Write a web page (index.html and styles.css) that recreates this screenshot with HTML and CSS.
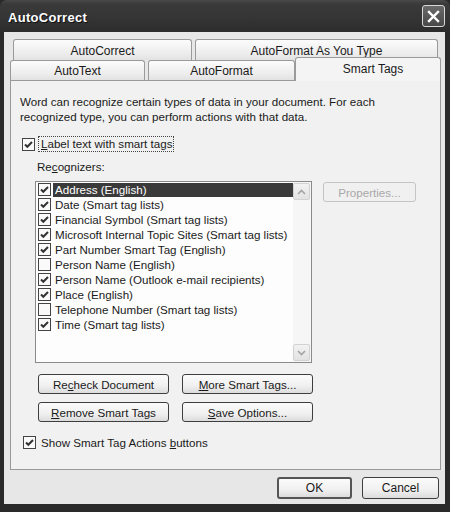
FILE: index.html
```html
<!DOCTYPE html>
<html>
<head>
<meta charset="utf-8">
<link rel="stylesheet" href="styles.css">
</head>
<body>
<div class="window">
  <div class="titlebar">
    <span class="title">AutoCorrect</span>
    <span class="close"><svg width="13" height="13" viewBox="0 0 13 13"><path d="M2 2 L11 11 M11 2 L2 11" stroke="#fff" stroke-width="2.4" stroke-linecap="square"/></svg></span>
  </div>
  <div class="client">
    <div class="tabs">
      <div class="tabrow row1">
        <div class="tab t-ac">AutoCorrect</div>
        <div class="tab t-afay">AutoFormat As You Type</div>
      </div>
      <div class="tabrow row2">
        <div class="tab t-at">AutoText</div>
        <div class="tab t-af">AutoFormat</div>
        <div class="tab t-st selected">Smart Tags</div>
      </div>
    </div>
    <div class="panel">
      <p class="desc">Word can recognize certain types of data in your document. For each<br>recognized type, you can perform actions with that data.</p>
      <div class="check-row label-row">
        <span class="cb checked"><svg viewBox="0 0 11 11"><path d="M2 5.5 L4.3 7.8 L9 3" /></svg></span>
        <span class="focus"><u>L</u>abel text with smart tags</span>
      </div>
      <div class="recog">Re<u>c</u>ognizers:</div>
      <div class="list-area">
        <div class="listbox">
          <div class="items">
            <div class="item sel"><span class="cb checked"><svg viewBox="0 0 11 11"><path d="M2 5.5 L4.3 7.8 L9 3" /></svg></span><span class="itext">Address (English)</span></div>
            <div class="item"><span class="cb checked"><svg viewBox="0 0 11 11"><path d="M2 5.5 L4.3 7.8 L9 3" /></svg></span><span class="itext">Date (Smart tag lists)</span></div>
            <div class="item"><span class="cb checked"><svg viewBox="0 0 11 11"><path d="M2 5.5 L4.3 7.8 L9 3" /></svg></span><span class="itext">Financial Symbol (Smart tag lists)</span></div>
            <div class="item"><span class="cb checked"><svg viewBox="0 0 11 11"><path d="M2 5.5 L4.3 7.8 L9 3" /></svg></span><span class="itext">Microsoft Internal Topic Sites (Smart tag lists)</span></div>
            <div class="item"><span class="cb checked"><svg viewBox="0 0 11 11"><path d="M2 5.5 L4.3 7.8 L9 3" /></svg></span><span class="itext">Part Number Smart Tag (English)</span></div>
            <div class="item"><span class="cb"></span><span class="itext">Person Name (English)</span></div>
            <div class="item"><span class="cb checked"><svg viewBox="0 0 11 11"><path d="M2 5.5 L4.3 7.8 L9 3" /></svg></span><span class="itext">Person Name (Outlook e-mail recipients)</span></div>
            <div class="item"><span class="cb checked"><svg viewBox="0 0 11 11"><path d="M2 5.5 L4.3 7.8 L9 3" /></svg></span><span class="itext">Place (English)</span></div>
            <div class="item"><span class="cb"></span><span class="itext">Telephone Number (Smart tag lists)</span></div>
            <div class="item"><span class="cb checked"><svg viewBox="0 0 11 11"><path d="M2 5.5 L4.3 7.8 L9 3" /></svg></span><span class="itext">Time (Smart tag lists)</span></div>
          </div>
          <div class="scrollbar">
            <span class="sbtn"><svg width="9" height="6" viewBox="0 0 9 6"><path d="M1 5 L4.5 1.5 L8 5" /></svg></span>
            <span class="track"></span>
            <span class="sbtn"><svg width="9" height="6" viewBox="0 0 9 6"><path d="M1 1 L4.5 4.5 L8 1" /></svg></span>
          </div>
        </div>
        <div class="btn disabled props">Properties...</div>
      </div>
      <div class="btn-grid">
        <div class="btn">Re<u>c</u>heck Document</div>
        <div class="btn"><u>M</u>ore Smart Tags...</div>
        <div class="btn"><u>R</u>emove Smart Tags</div>
        <div class="btn"><u>S</u>ave Options...</div>
      </div>
      <div class="check-row show-row">
        <span class="cb checked"><svg viewBox="0 0 11 11"><path d="M2 5.5 L4.3 7.8 L9 3" /></svg></span>
        <span>Show Smart Tag Actions <u>b</u>uttons</span>
      </div>
    </div>
    <div class="footer">
      <div class="btn default">OK</div>
      <div class="btn cancel">Cancel</div>
    </div>
  </div>
</div>
</body>
</html>
```
FILE: styles.css
```css
* { box-sizing: border-box; }
html, body { margin: 0; padding: 0; }
body {
  background: #262626;
  font-family: "Liberation Sans", Arial, sans-serif;
  font-size: 11.6px;
  color: #1a1a1a;
}
.window {
  width: 450px;
  height: 512px;
  background: #2a2a2a;
  display: flex;
  flex-direction: column;
  padding: 0 5px 8px 4px;
}
.titlebar {
  height: 32px;
  margin: 0 -5px 0 -4px;
  padding: 0 5px 0 8px;
  display: flex;
  align-items: center;
  justify-content: space-between;
  background: linear-gradient(#4a4a4a 0%, #3a3a3a 12%, #343434 60%, #2c2c2c 100%);
  border-radius: 7px 7px 0 0;
}
.title {
  color: #fff;
  font-weight: bold;
  font-size: 13px;
  letter-spacing: 0.3px;
  text-shadow: 1px 1px 0 #111;
  margin-top: 2px;
}
.close {
  width: 23px;
  height: 22px;
  border: 1px solid #d8d8d8;
  border-radius: 3px;
  background: linear-gradient(#6a6a6a, #484848);
  display: flex;
  align-items: center;
  justify-content: center;
}
.client {
  flex: 1;
  background: #e7e7e7;
  padding: 7px 4px 0 6px;
  display: flex;
  flex-direction: column;
}
.tabs {
  height: 41px;
  display: flex;
  flex-direction: column;
}
.tabrow {
  display: flex;
  gap: 3px;
}
.row1 {
  height: 21px;
  padding-left: 3px;
}
.row2 {
  height: 20px;
  align-items: flex-end;
}
.tab {
  height: 100%;
  border: 1px solid #9a9a9a;
  border-bottom: none;
  border-radius: 3px 3px 0 0;
  background: linear-gradient(#fcfcfc, #ececec 70%, #e2e2e2);
  display: flex;
  align-items: center;
  justify-content: center;
  padding-top: 1px;
  font-size: 12px;
}
.t-ac { width: 179px; }
.t-afay { width: 243px; }
.t-at { width: 135px; }
.t-af { width: 147px; }
.t-st {
  width: 146px;
  margin-left: -3px;
}
.tab.selected {
  height: 24px;
  margin-bottom: -1px;
  background: #f4f4f4;
  position: relative;
  z-index: 1;
  padding-left: 10px;
  align-items: flex-start;
  padding-top: 4px;
}
.panel {
  height: 390px;
  border: 1px solid #9a9a9a;
  background: #f1f1f1;
  padding: 13px 8px 0 9px;
}
.desc {
  margin: 0;
  line-height: 15px;
}
.check-row {
  display: flex;
  align-items: center;
  gap: 3px;
}
.label-row {
  margin-top: 12px;
  height: 16px;
  padding-left: 2px;
}
.focus {
  border: 1px dotted #444;
  padding: 0 1px 0 2px;
  line-height: 14px;
}
.cb {
  width: 13px;
  height: 13px;
  border: 1px solid #444;
  background: #fafafa;
  display: inline-flex;
  flex: none;
}
.cb svg {
  width: 11px;
  height: 11px;
  fill: none;
  stroke: #333;
  stroke-width: 2;
}
.recog {
  margin-top: 7px;
  padding-left: 17px;
  line-height: 15px;
}
.list-area {
  display: flex;
  align-items: flex-start;
  gap: 11px;
  margin-top: 7px;
  padding-left: 15px;
}
.listbox {
  width: 277px;
  height: 182px;
  border: 1px solid #8a8a8a;
  background: #fdfdfd;
  display: flex;
}
.items {
  flex: 1;
  min-width: 0;
  padding: 0 0 0 2px;
}
.item {
  height: 15px;
  display: flex;
  align-items: center;
  white-space: nowrap;
  overflow: hidden;
}
.item .cb {
  margin-right: 2px;
}
.itext {
  flex: 1;
  padding-left: 2px;
  line-height: 14px;
}
.item.sel .itext {
  background: #3a3a3a;
  color: #fff;
}
.scrollbar {
  width: 18px;
  display: flex;
  flex-direction: column;
  background: #f6f6f6;
  padding: 1px 1px 1px 0;
}
.sbtn {
  height: 17px;
  border: 1px solid #d2d2d2;
  border-radius: 2px;
  background: linear-gradient(#f2f2f2, #e2e2e2);
  display: flex;
  align-items: center;
  justify-content: center;
}
.sbtn svg {
  fill: none;
  stroke: #a4a4a4;
  stroke-width: 1.6;
}
.track { flex: 1; }
.btn {
  height: 20px;
  border: 1px solid #3e3e3e;
  border-radius: 3px;
  background: linear-gradient(#fbfbfb, #f0f0f0 60%, #dcdcdc);
  display: flex;
  align-items: center;
  justify-content: center;
  white-space: nowrap;
}
.btn.disabled {
  color: #a8a8a8;
  border-color: #c4c4c4;
  background: #f0f0f0;
}
.props {
  width: 93px;
  margin-top: 1px;
}
.btn-grid {
  display: grid;
  grid-template-columns: 131px 131px;
  column-gap: 13px;
  row-gap: 8px;
  margin-top: 11px;
  padding-left: 18px;
}
.show-row {
  margin-top: 14px;
  padding-left: 3px;
  gap: 5px;
}
.footer {
  display: flex;
  justify-content: flex-end;
  gap: 10px;
  margin-top: 7px;
  padding-right: 2px;
}
.footer .btn {
  height: 22px;
  width: 76px;
  font-size: 12px;
}
.btn.default {
  border: 2px solid #555;
  width: 75px;
}
.btn.cancel { width: 77px; }
```
